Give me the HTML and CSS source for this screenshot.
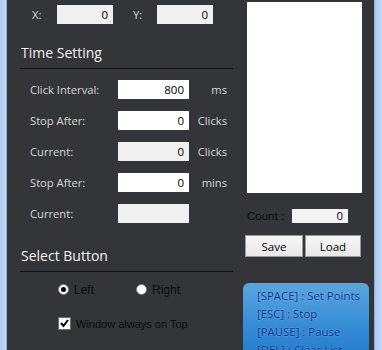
FILE: index.html
```html
<!DOCTYPE html>
<html>
	<head>
		<title>Auto Clicker</title>
		<link rel="stylesheet" href="styles.css">
	</head>
	<body>
		<div class="frame">
			<div class="edge edge-left"></div>
			<div class="main">
				<div class="left-col">
					<div class="coords">
						<span class="coord-label">X:</span>
						<div class="field field-ro">0</div>
						<span class="coord-label coord-y">Y:</span>
						<div class="field field-ro">0</div>
					</div>

					<h3 class="section-title">Time Setting</h3>
					<div class="settings">
						<span class="lbl">Click Interval:</span>
						<div class="field">800</div>
						<span class="unit">ms</span>

						<span class="lbl">Stop After:</span>
						<div class="field">0</div>
						<span class="unit">Clicks</span>

						<span class="lbl">Current:</span>
						<div class="field field-ro">0</div>
						<span class="unit">Clicks</span>

						<span class="lbl">Stop After:</span>
						<div class="field">0</div>
						<span class="unit">mins</span>

						<span class="lbl">Current:</span>
						<div class="field field-ro"></div>
						<span class="unit"></span>
					</div>

					<h3 class="section-title section-title-2">Select Button</h3>
					<div class="radios">
						<label class="opt"><span class="radio checked"></span>Left</label>
						<label class="opt opt-right"><span class="radio"></span>Right</label>
					</div>
					<label class="opt check-row">
						<span class="checkbox">
							<svg width="11" height="11" viewBox="0 0 11 11"><path d="M2 5 L4.5 8 L9 2" fill="none" stroke="#000" stroke-width="2"/></svg>
						</span>
						Window always on Top
					</label>
				</div>

				<div class="right-col">
					<div class="listbox"></div>
					<div class="count-row">
						<span class="count-label">Count :</span>
						<div class="field field-small">0</div>
					</div>
					<div class="buttons">
						<button class="btn btn-save">Save</button>
						<button class="btn btn-load">Load</button>
					</div>
					<div class="help">
						<div>[SPACE] : Set Points</div>
						<div>[ESC] : Stop</div>
						<div>[PAUSE] : Pause</div>
						<div>[DEL] : Clear List</div>
					</div>
				</div>
			</div>
			<div class="edge edge-right"></div>
		</div>
	</body>
</html>
```

FILE: styles.css
```css
body {
	margin: 0;
	background: #333539;
	font-family: "Open Sans", "DejaVu Sans", sans-serif;
	overflow: hidden;
}

.frame {
	display: flex;
	height: 350px;
	width: 382px;
}

.edge {
	background: linear-gradient(to right, #a9c8ee, #c4daf5);
}
.edge-left {
	width: 7px;
	border-right: 1px solid #8fb1dc;
	box-sizing: border-box;
}
.edge-right {
	width: 8px;
	border-left: 1px solid #8fb1dc;
	box-sizing: border-box;
}

.main {
	flex: 1;
	display: flex;
	background: #333539;
}

.left-col {
	width: 236px;
}

.field {
	background: #fff;
	color: #000;
	height: 19px;
	line-height: 19px;
	font-size: 11.5px;
	text-align: right;
	padding-right: 5px;
	box-sizing: border-box;
	font-family: "Open Sans", sans-serif;
}
.field-ro {
	background: #f0f0f0;
}

.coords {
	display: flex;
	align-items: center;
	padding-top: 5px;
	padding-left: 25px;
}
.coords .field {
	width: 56px;
}
.coord-label {
	color: #d8d8d8;
	font-size: 11.2px;
	width: 25px;
}
.coord-y {
	margin-left: 20px;
	width: 24px;
}

.section-title {
	margin: 19px 0 0 13px;
	width: 213px;
	font-size: 14px;
	font-weight: normal;
	line-height: 20px;
	color: #f2f2f2;
	padding: 0 0 5px 1px;
	border-bottom: 1px solid #121314;
	box-sizing: border-box;
	height: 26px;
}

.settings {
	display: grid;
	grid-template-columns: 88px 71px 38px;
	grid-auto-rows: 19px;
	row-gap: 12px;
	align-items: center;
	margin: 11px 0 0 23px;
}
.lbl {
	color: #d8d8d8;
	font-size: 11.2px;
}
.unit {
	color: #d8d8d8;
	font-size: 11.2px;
	text-align: right;
}

.section-title-2 {
	margin-top: 23px;
}

.opt {
	display: flex;
	align-items: center;
	color: #0c0c0c;
	font-family: "Liberation Sans", sans-serif;
	font-size: 11px;
}

.radios {
	display: flex;
	margin: 12px 0 0 51px;
	height: 11px;
	align-items: center;
}
.radios .opt {
	font-size: 12px;
}
.opt-right {
	margin-left: 42px;
}
.radio {
	width: 11px;
	height: 11px;
	border-radius: 50%;
	background: #fff;
	border: 1px solid #7a7a7a;
	box-sizing: border-box;
	margin-right: 5px;
	position: relative;
}
.radio.checked::after {
	content: "";
	position: absolute;
	left: 2px;
	top: 2px;
	width: 5px;
	height: 5px;
	border-radius: 50%;
	background: #000;
}

.check-row {
	margin: 22px 0 0 51px;
}
.checkbox {
	width: 13px;
	height: 13px;
	background: #fff;
	border: 1px solid #6d6d6d;
	box-sizing: border-box;
	margin-right: 5px;
	display: flex;
	align-items: center;
	justify-content: center;
}

.right-col {
	width: 131px;
	height: 350px;
	display: flex;
	flex-direction: column;
	overflow: hidden;
}
.right-col > * {
	flex-shrink: 0;
}

.listbox {
	margin: 2px 0 0 4px;
	width: 115px;
	height: 191px;
	background: #fff;
}

.count-row {
	display: flex;
	align-items: center;
	margin: 16px 0 0 4px;
	height: 14px;
}
.count-label {
	width: 45px;
	color: #0c0c0c;
	font-family: "Liberation Sans", sans-serif;
	font-size: 11.5px;
}
.field-small {
	width: 56px;
	height: 14px;
	line-height: 14px;
	background: #f4f4f4;
}

.buttons {
	display: flex;
	margin: 12px 0 0 2px;
	gap: 2px;
}
.btn {
	height: 22px;
	background: linear-gradient(#f5f5f5, #e8e8e8);
	border: 1px solid #9a9a9a;
	font-family: "Open Sans", sans-serif;
	font-size: 11.5px;
	color: #000;
	padding: 0;
}
.btn-save {
	width: 58px;
}
.btn-load {
	width: 56px;
}

.help {
	margin: 26px 0 0 0;
	width: 126px;
	height: 80px;
	border-radius: 6px 6px 0 0;
	background: linear-gradient(#5aa6de, #3189d4 60%, #2078cc);
	padding: 4px 0 0 14px;
	box-sizing: border-box;
	color: #173685;
	font-size: 11.4px;
	line-height: 18px;
	text-shadow: 0 0 2px rgba(180, 220, 255, 0.5);
}
```
